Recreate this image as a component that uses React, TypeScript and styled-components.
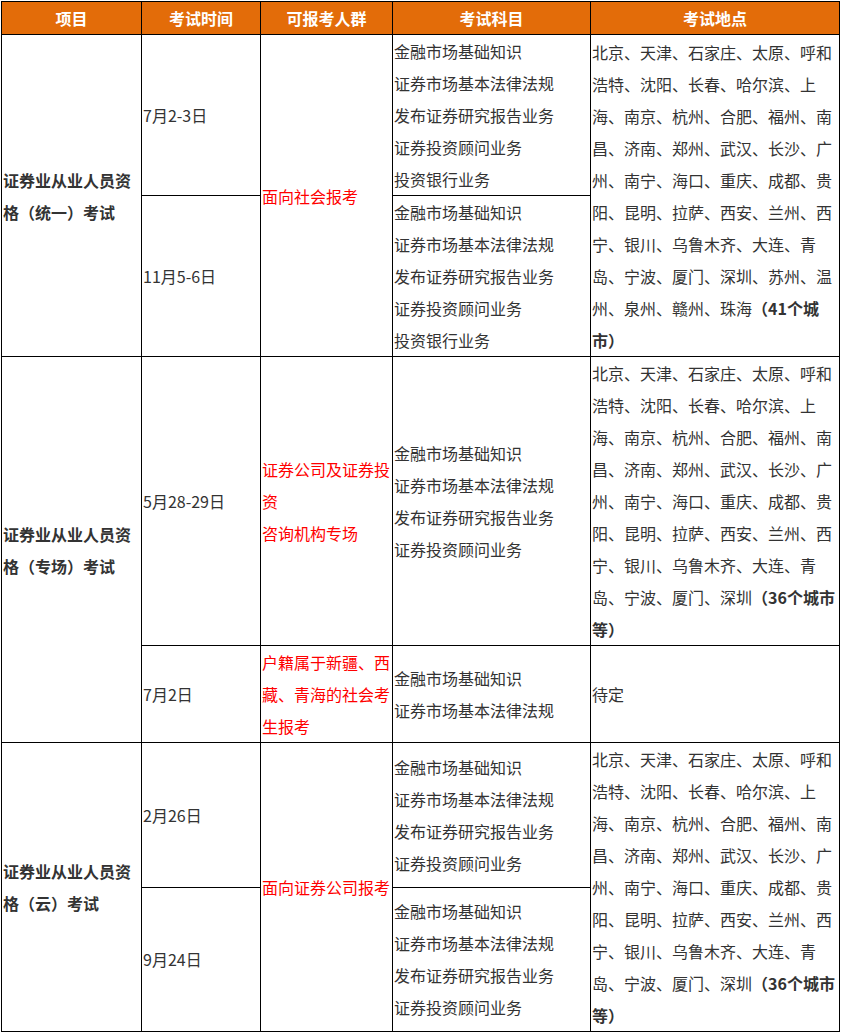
import React from 'react'
import styled, { createGlobalStyle } from 'styled-components'

const GlobalStyle = createGlobalStyle`
  html, body {
    margin: 0;
    padding: 0;
    background: #ffffff;
  }
  body {
    font-family: "Microsoft YaHei", "Noto Sans CJK SC", "Noto Sans", sans-serif;
    font-size: 16px;
    color: #333333;
  }
`

const Page = styled.div`
  padding: 1px 0 0 1px;
`

const Table = styled.table`
  width: 839px;
  table-layout: fixed;
  border-collapse: collapse;
  border: 1px solid #000000;
`

const HeadCell = styled.th`
  background: #e36c09;
  color: #ffffff;
  font-weight: bold;
  font-size: 16px;
  line-height: 32px;
  padding: 0;
  text-align: center;
  border: 1px solid #000000;
`

const Cell = styled.td<{ $red?: boolean; $bold?: boolean }>`
  padding: 0 1px;
  line-height: 32px;
  font-size: 16px;
  vertical-align: middle;
  text-align: left;
  border: 1px solid #000000;
  color: ${(p) => (p.$red ? '#ff0000' : '#333333')};
  font-weight: ${(p) => (p.$bold ? 'bold' : 'normal')};
  word-break: break-all;
`

const Strong = styled.strong`
  font-weight: bold;
`

const Line = styled.div`
  white-space: nowrap;
`

const allSubjects = [
  '金融市场基础知识',
  '证券市场基本法律法规',
  '发布证券研究报告业务',
  '证券投资顾问业务',
  '投资银行业务',
]

const baseCities =
  '北京、天津、石家庄、太原、呼和浩特、沈阳、长春、哈尔滨、上海、南京、杭州、合肥、福州、南昌、济南、郑州、武汉、长沙、广州、南宁、海口、重庆、成都、贵阳、昆明、拉萨、西安、兰州、西宁、银川、乌鲁木齐、大连、青岛、宁波、厦门、深圳'

function Subjects({ count }: { count: number }) {
  return (
    <>
      {allSubjects.slice(0, count).map((s) => (
        <Line key={s}>{s}</Line>
      ))}
    </>
  )
}

export default function App() {
  return (
    <Page>
      <GlobalStyle />
      <Table>
        <colgroup>
          <col style={{ width: 140 }} />
          <col style={{ width: 119 }} />
          <col style={{ width: 132 }} />
          <col style={{ width: 198 }} />
          <col style={{ width: 249 }} />
        </colgroup>
        <thead>
          <tr>
            <HeadCell>项目</HeadCell>
            <HeadCell>考试时间</HeadCell>
            <HeadCell>可报考人群</HeadCell>
            <HeadCell>考试科目</HeadCell>
            <HeadCell>考试地点</HeadCell>
          </tr>
        </thead>
        <tbody>
          <tr>
            <Cell rowSpan={2} $bold>
              证券业从业人员资格（统一）考试
            </Cell>
            <Cell>7月2-3日</Cell>
            <Cell rowSpan={2} $red>
              面向社会报考
            </Cell>
            <Cell>
              <Subjects count={5} />
            </Cell>
            <Cell rowSpan={2}>
              {baseCities}、苏州、温州、泉州、赣州、珠海<Strong>（41个城市）</Strong>
            </Cell>
          </tr>
          <tr>
            <Cell>11月5-6日</Cell>
            <Cell>
              <Subjects count={5} />
            </Cell>
          </tr>

          <tr>
            <Cell rowSpan={2} $bold>
              证券业从业人员资格（专场）考试
            </Cell>
            <Cell>5月28-29日</Cell>
            <Cell $red>
              证券公司及证券投资
              <br />
              咨询机构专场
            </Cell>
            <Cell>
              <Subjects count={4} />
            </Cell>
            <Cell>
              {baseCities}
              <Strong>（36个城市等）</Strong>
            </Cell>
          </tr>
          <tr>
            <Cell>7月2日</Cell>
            <Cell $red>户籍属于新疆、西藏、青海的社会考生报考</Cell>
            <Cell>
              <Subjects count={2} />
            </Cell>
            <Cell>待定</Cell>
          </tr>

          <tr>
            <Cell rowSpan={2} $bold>
              证券业从业人员资格（云）考试
            </Cell>
            <Cell>2月26日</Cell>
            <Cell rowSpan={2} $red>
              面向证券公司报考
            </Cell>
            <Cell>
              <Subjects count={4} />
            </Cell>
            <Cell rowSpan={2}>
              {baseCities}
              <Strong>（36个城市等）</Strong>
            </Cell>
          </tr>
          <tr>
            <Cell>9月24日</Cell>
            <Cell>
              <Subjects count={4} />
            </Cell>
          </tr>
        </tbody>
      </Table>
    </Page>
  )
}
